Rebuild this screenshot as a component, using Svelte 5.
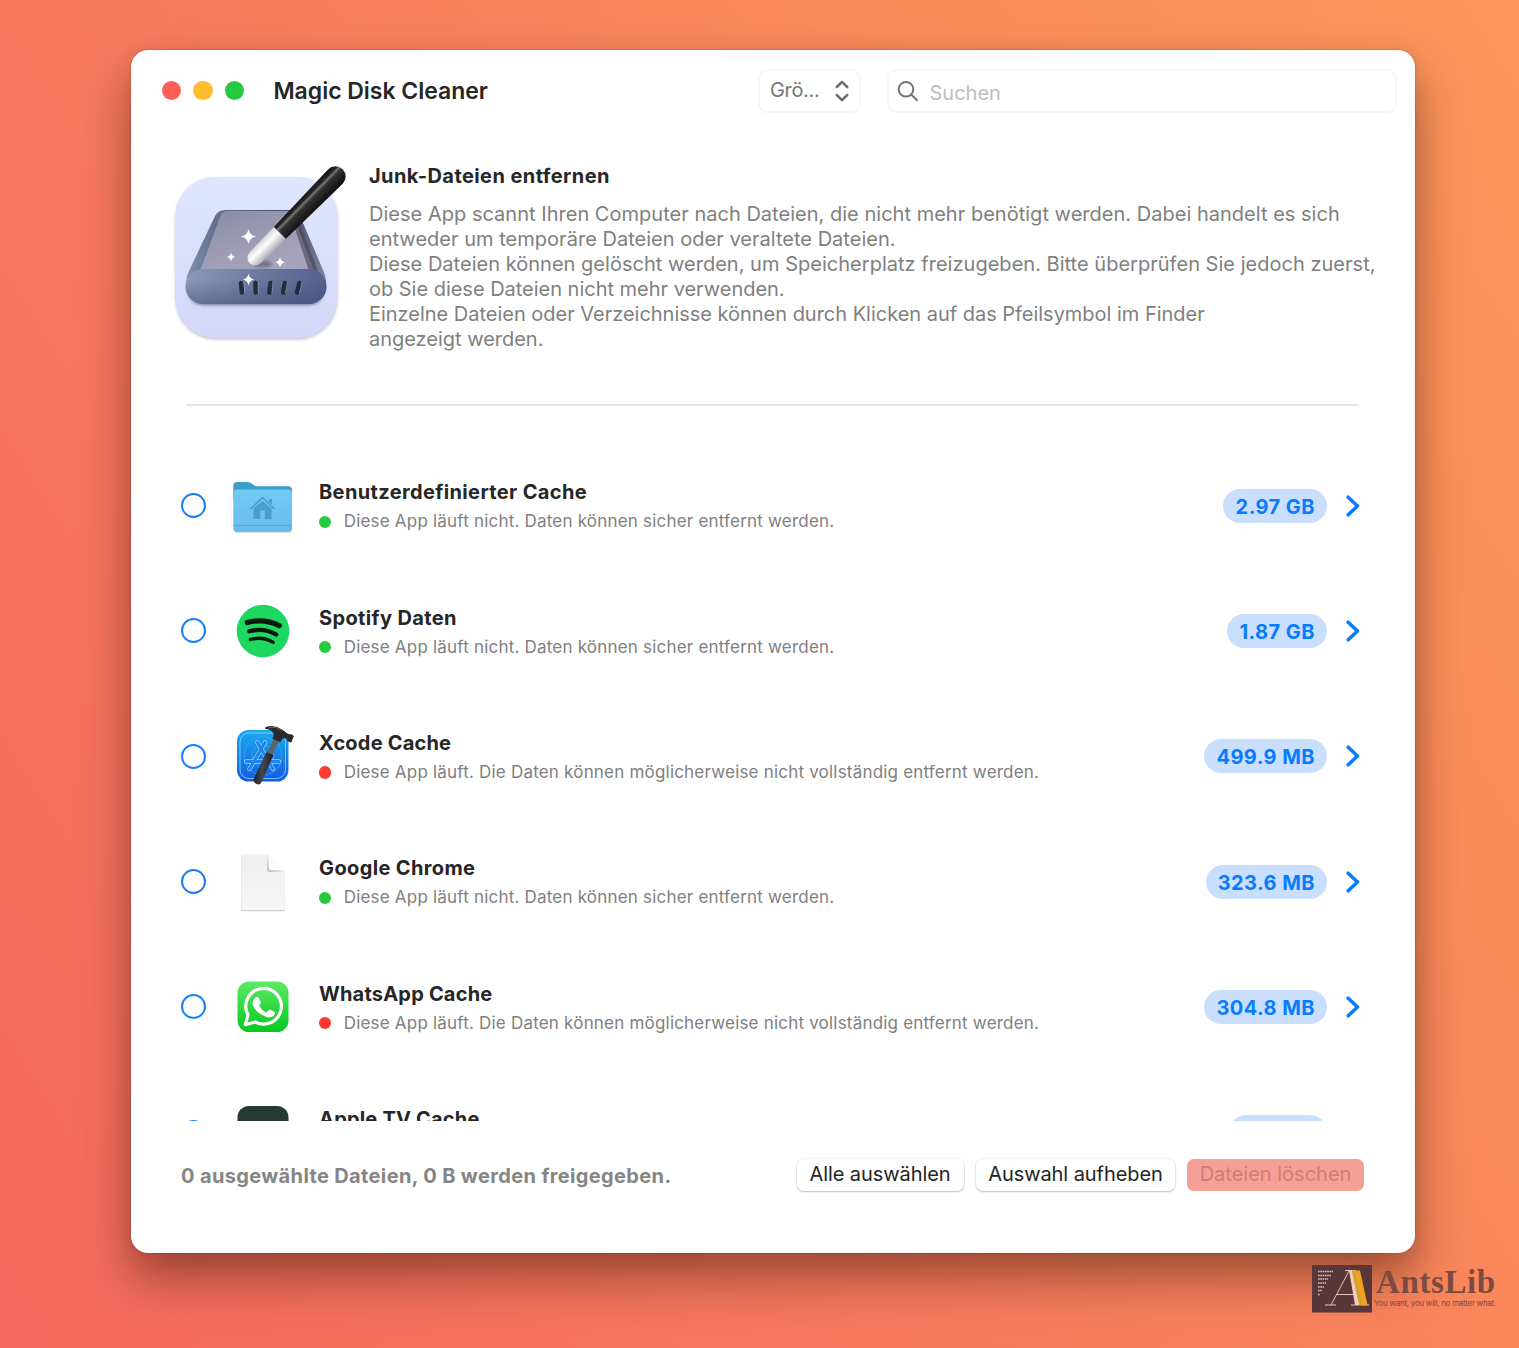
<script>
  const idle = 'Diese App läuft nicht. Daten können sicher entfernt werden.';
  const running = 'Diese App läuft. Die Daten können möglicherweise nicht vollständig entfernt werden.';
  const items = [
    { name: 'Benutzerdefinierter Cache', icon: 'folder', live: false, size: '2.97 GB' },
    { name: 'Spotify Daten', icon: 'spotify', live: false, size: '1.87 GB' },
    { name: 'Xcode Cache', icon: 'xcode', live: true, size: '499.9 MB' },
    { name: 'Google Chrome', icon: 'doc', live: false, size: '323.6 MB' },
    { name: 'WhatsApp Cache', icon: 'whatsapp', live: true, size: '304.8 MB' },
    { name: 'Apple TV Cache', icon: 'tv', live: false, size: '71.1 MB' }
  ];
  const lines = [
    'Diese App scannt Ihren Computer nach Dateien, die nicht mehr benötigt werden. Dabei handelt es sich',
    'entweder um temporäre Dateien oder veraltete Dateien.',
    'Diese Dateien können gelöscht werden, um Speicherplatz freizugeben. Bitte überprüfen Sie jedoch zuerst,',
    'ob Sie diese Dateien nicht mehr verwenden.',
    'Einzelne Dateien oder Verzeichnisse können durch Klicken auf das Pfeilsymbol im Finder',
    'angezeigt werden.'
  ];
</script>

<div class="desktop">
  <main class="window">
    <header>
      <div class="lights"><i class="close"></i><i class="min"></i><i class="max"></i></div>
      <h1>Magic Disk Cleaner</h1>
      <button class="sort">
        <span>Grö...</span>
        <svg width="14" height="22" viewBox="0 0 14 22"><path d="M1.800 7 7 1.800l5.200 5.200M1.800 15 7 20.200l5.200-5.200" /></svg>
      </button>
      <label class="search">
        <svg width="22" height="22" viewBox="0 0 22 22"><circle cx="9" cy="9.300" r="7.300" /><path d="m14.300 14.600 5.700 5.700" /></svg>
        <span>Suchen</span>
      </label>
    </header>

    <section class="intro">
      <svg class="app" width="200" height="210" viewBox="0 0 200 210">
        <defs>
          <linearGradient id="tile" x1="0" y1="0" x2="0" y2="1"><stop offset="0" stop-color="#dfe6fe" /><stop offset="1" stop-color="#d5d7f6" /></linearGradient>
          <linearGradient id="top" x1="0" y1="0" x2="0.6" y2="1"><stop offset="0" stop-color="#868ba5" /><stop offset=".55" stop-color="#9d9bb4" /><stop offset="1" stop-color="#a8a3bf" /></linearGradient>
          <linearGradient id="side" x1="0" y1="0" x2="1" y2="0"><stop offset="0" stop-color="#8391ad" /><stop offset=".2" stop-color="#62738f" /><stop offset=".75" stop-color="#454b6a" /><stop offset="1" stop-color="#8084a3" /></linearGradient>
          <linearGradient id="front" x1="0" y1="0" x2="1" y2="0"><stop offset="0" stop-color="#8b9ab5" /><stop offset=".5" stop-color="#6c7aa0" /><stop offset="1" stop-color="#53628e" /></linearGradient>
          <linearGradient id="shade" x1="0" y1="0" x2="0" y2="1"><stop offset=".3" stop-color="#38466e" stop-opacity="0" /><stop offset="1" stop-color="#38466e" stop-opacity=".45" /></linearGradient>
          <linearGradient id="stick" x1="0" y1="0" x2="0" y2="1"><stop offset="0" stop-color="#151515" /><stop offset=".22" stop-color="#242424" /><stop offset=".32" stop-color="#777" /><stop offset=".44" stop-color="#333" /><stop offset="1" stop-color="#0d0d0d" /></linearGradient>
          <linearGradient id="tip" x1="0" y1="0" x2="0" y2="1"><stop offset="0" stop-color="#d5d5da" /><stop offset=".4" stop-color="#fff" /><stop offset="1" stop-color="#aaa9b0" /></linearGradient>
          <filter id="soft" x="-30%" y="-50%" width="160%" height="200%"><feGaussianBlur stdDeviation="1.800" /></filter>
        </defs>
        <rect x="15.500" y="28" width="162" height="161.500" rx="40" fill="#66688a" opacity=".4" filter="url(#soft)" />
        <rect x="15.500" y="27" width="162" height="161" rx="40" fill="url(#tile)" />
        <rect x="28" y="124" width="136" height="31.500" rx="15" fill="#39415f" opacity=".55" filter="url(#soft)" />
        <path d="M65 60h66q6 0 9 6l23 54q3 6 3 14H26q0-7 3-13l26-55q3-6 10-6Z" fill="url(#side)" />
        <path d="M67 61h60q5 0 7 6l20 54H40l20-54q2-6 7-6Z" fill="url(#top)" />
        <path d="M129 61q6 0 8 6l21 54h-9Z" fill="#474254" opacity=".6" />
        <rect x="25.500" y="119" width="141" height="35" rx="17.500" fill="url(#front)" />
        <rect x="25.500" y="119" width="141" height="35" rx="17.500" fill="url(#shade)" />
        <g fill="none" stroke="#252c3e" stroke-width="4.600" stroke-linecap="round"><path d="m81 133 1 9.500M95.500 133l.2 9.500M110.500 133l-1 9.500M125 133l-1.800 9.500M139.500 133l-2.500 9.500" /></g>
        <path d="m84 132 .8 11M98.300 132v11M113 132l-1 11M127.500 132l-2 11M142 132l-2.500 11" stroke="#8b98bb" stroke-width=".7" />
        <ellipse cx="102" cy="114" rx="10" ry="3.500" fill="#55506a" opacity=".6" filter="url(#soft)" />
        <g transform="translate(95.300 107.800) rotate(-45.400)">
          <path d="M0-7.800 36-8.500V8.500L0 7.800A7.800 7.800 0 0 1 0-7.800Z" fill="url(#tip)" />
          <path d="M35-8.500 114-10.300a10.300 10.300 0 0 1 0 20.600L35 8.500Z" fill="url(#stick)" />
        </g>
        <g fill="#fff">
          <path d="M88.500 79q1.200 6.500 7.500 7.500-6.300 1-7.500 7.500-1.200-6.500-7.500-7.500 6.300-1 7.500-7.500Z" />
          <path d="M71 102.500q.8 4 4.300 4.500-3.500.6-4.300 4.500-.8-3.900-4.300-4.500 3.500-.5 4.300-4.500Z" />
          <path d="M120 107q.9 4.600 5 5.200-4.100.8-5 5.200-.9-4.400-5-5.200 4.100-.6 5-5.200Z" />
          <path d="M88.500 123.500q.9 5.200 5.500 6-4.600.8-5.500 6-.9-5.200-5.500-6 4.600-.8 5.500-6Z" />
        </g>
      </svg>
      <div class="copy">
        <h2>Junk-Dateien entfernen</h2>
        {#each lines as line}<p>{line}</p>{/each}
      </div>
    </section>

    <hr />

    <ul>
      {#each items as item (item.name)}
        <li>
          <span class="radio"></span>
          <svg class="icon" width="64" height="64" viewBox="0 0 64 64">
            {#if item.icon === 'folder'}
              <defs><linearGradient id="fold" x1="0" y1="0" x2="0" y2="1"><stop offset="0" stop-color="#72cbf6" /><stop offset="1" stop-color="#66bbed" /></linearGradient></defs>
              <rect x="2.800" y="52" width="58" height="6.500" rx="3" fill="#a9bcc6" />
              <path d="M2.300 18V12q0-4 4-4h10q3 0 5 2l2 1.500q1 .8 3 .8H57q4 0 4 3.700V26H2.300Z" fill="#3b9dca" />
              <rect x="2.300" y="15.500" width="58.700" height="42" rx="4" fill="url(#fold)" />
              <path d="M2.800 51.500h57.700" stroke="#56a9d8" stroke-width="1" />
              <path d="M31.500 27 22.500 34.500V45h6.700v-8.500h4.600V45h6.700V34.500Z" fill="#489fcd" />
              <path d="m20 34.500 11.500-10.800L43 34.500" fill="none" stroke="#489fcd" stroke-width="1.600" stroke-linecap="round" />
              <path d="M38 25h3v5.500l-3-2.800Z" fill="#489fcd" />
            {:else if item.icon === 'spotify'}
              <circle cx="32" cy="32" r="26.300" fill="#1ed760" />
              <g fill="none" stroke="#08180d" stroke-linecap="round"><path d="M16.300 23.600q17-4.800 32 3" stroke-width="5.200" /><path d="M18.200 32.300q14.500-4 27 3.200" stroke-width="4.300" /><path d="M19.400 40.400q12.500-3.200 22.800 3" stroke-width="3.400" /></g>
            {:else if item.icon === 'xcode'}
              <defs>
                <linearGradient id="xc" x1="0" y1="0" x2="0" y2="1"><stop offset="0" stop-color="#19a9f0" /><stop offset="1" stop-color="#145be3" /></linearGradient>
                <linearGradient id="shaft" x1="0" y1="0" x2="1" y2="0"><stop offset="0" stop-color="#202225" /><stop offset=".45" stop-color="#43464a" /><stop offset="1" stop-color="#1c1e20" /></linearGradient>
              </defs>
              <rect x="6" y="6" width="51.500" height="51.500" rx="11.500" fill="url(#xc)" />
              <rect x="9" y="9" width="45.500" height="45.500" rx="9" fill="none" stroke="#8fdcff" stroke-width=".8" />
              <g fill="none" stroke="#5ec4fa" stroke-width=".4"><circle cx="32" cy="32" r="19" /><circle cx="32" cy="32" r="11" /></g>
              <g fill="none" stroke-linecap="round"><path d="M34 18.500 18.500 45M26.500 18.500 42 45M15 37.500h33" stroke="#8fd8ff" stroke-width="4.400" /><path d="M34 18.500 18.500 45M26.500 18.500 42 45M15 37.500h33" stroke="#1f84ea" stroke-width="3" /></g>
              <path d="m43.500 13 5 2.200-8 18-5.500-2.400Z" fill="#5d646b" />
              <path d="m35.500 28 6.800 3L31 57.500q-1.600 4-5.600 2.500-4-1.700-2.300-6Z" fill="url(#shaft)" />
              <path d="M34 3.500q9-3.600 17.500 2.200l5 3.800q1.700 1.300 3.400.6l3 2-2.700 6.700-4-1.700q.3-1.700-1.500-2.500l-2.700-.7-2.700 4.400-8-3.600 1.700-3.900Q41.500 5.500 34 4.700Z" fill="#292b2e" />
              <path d="M38 3.600q7-1.500 13 2.900" fill="none" stroke="#858585" stroke-width=".7" />
            {:else if item.icon === 'doc'}
              <defs>
                <linearGradient id="paper" x1="0" y1="0" x2="0" y2="1"><stop offset="0" stop-color="#efefef" /><stop offset="1" stop-color="#f6f6f6" /></linearGradient>
                <linearGradient id="curl" x1="0" y1="1" x2="1" y2="0"><stop offset=".1" stop-color="#c4c4c4" /><stop offset=".5" stop-color="#efefef" /></linearGradient>
              </defs>
              <path d="M10 6h28l16 16v37.500q0 1.700-1.700 1.700H12q-2 0-2-1.700Z" fill="#c6c6c6" />
              <path d="M10.200 4.500h27.300L54 20.500v38q0 1.700-1.700 1.700H12q-1.800 0-1.800-1.700Z" fill="url(#paper)" />
              <path d="M36 4.500h1.500L54 20.500v1.500H38.500q-2.500 0-2.500-2.500Z" fill="url(#curl)" />
              <path d="M37.800 5 53.500 20H40q-2.200 0-2.200-2.200Z" fill="#fcfcfc" />
            {:else if item.icon === 'whatsapp'}
              <defs><linearGradient id="wa" x1="0" y1="0" x2="0" y2="1"><stop offset="0" stop-color="#5cea68" /><stop offset="1" stop-color="#05c91d" /></linearGradient></defs>
              <rect x="6.500" y="6.500" width="51" height="50.500" rx="11.500" fill="url(#wa)" />
              <path d="m14.300 49.700 2.700-9.800A17.800 17.800 0 1 1 24.200 47Z" fill="none" stroke="#fff" stroke-width="3.200" stroke-linejoin="round" />
              <path d="M24 23q2.200-2 3.600-.4l2.200 4.500q.4 1-1.600 3.300 2.500 5 7.300 7.200l2-2.300q.9-1 2-.5l4 2.200q1.400.8-.5 3.400-3 3-7.700 1.500-9-3-12.900-10.400-2.500-5.300 1.600-8.500Z" fill="#fff" />
            {:else}
              <rect x="6.500" y="6" width="51" height="51" rx="11.500" fill="#263932" />
            {/if}
          </svg>
          <div class="label">
            <h3 class:tight={item.name.length < 15 && item.icon !== 'spotify' && item.icon !== 'doc'}>{item.name}</h3>
            <p class:live={item.live}><i></i><span>{item.live ? running : idle}</span></p>
          </div>
          <b class="badge">{item.size}</b>
          <svg class="chev" width="14" height="22" viewBox="0 0 14 22"><path d="M2.200 2.200 11.500 11l-9.300 8.800" /></svg>
        </li>
      {/each}
    </ul>

    <footer>
      <strong>0 ausgewählte Dateien, 0 B werden freigegeben.</strong>
      <button class="all">Alle auswählen</button>
      <button class="none">Auswahl aufheben</button>
      <button class="delete" disabled>Dateien löschen</button>
    </footer>
  </main>

  <div class="brand">
    <svg width="60" height="48" viewBox="0 0 60 48">
      <rect width="60" height="47.500" fill="#58373a" />
      <g stroke="#e9c0b2" stroke-width="1.500" stroke-dasharray="1.600 .7"><path d="M6 6.500h15M6 10.500h13M6 14h10M6 18h8M6 22h6M6 25.500h4M6 29.500h2" /></g>
      <path d="m37 6-18 34M24 29.500h18M13 40h11M33 5.500h11M39 40h18" fill="none" stroke="#e8c4b5" stroke-width="1" />
      <path d="M37 5.500h4l7 34.500h-5Z" fill="#f6cbbb" />
      <path d="M40 5.500h8L55.500 40h-8Z" fill="#f5a021" />
      <path d="M40 5.500h3L50 40h-3Z" fill="#c9a92b" />
    </svg>
    <div><div class="word">AntsLib</div><div class="motto">You want, you will, no matter what.</div></div>
  </div>
</div>

<style>
  :global(body) { margin: 0; }
  .desktop {
    width: 1519px; height: 1348px; box-sizing: border-box; padding: 50px 0 0 131px; overflow: hidden; position: relative;
    background: linear-gradient(58deg, #f3695f 0%, #f77b5d 42%, #fb8c5b 75%, #fd975a 100%);
    font-family: Inter, 'Liberation Sans', sans-serif; color: #262626;
  }
  h1, h2, h3, p, ul { margin: 0; padding: 0; white-space: nowrap; }
  button { font: inherit; padding: 0; }
  .window {
    width: 1284px; height: 1203px; border-radius: 17px; background: #fff; display: flex; flex-direction: column;
    box-shadow: 0 0 2px rgba(60, 20, 10, .4), 0 26px 48px rgba(60, 25, 10, .46), 0 6px 24px rgba(60, 25, 10, .08);
  }
  header { height: 81px; display: flex; align-items: center; padding: 0 18px 0 31px; flex: none; }
  .lights { display: flex; gap: 12.200px; }
  .lights i { width: 19.200px; height: 19.200px; border-radius: 50%; }
  .close { background: #fe5f57; }
  .min { background: #febc2e; }
  .max { background: #28c840; }
  h1 { font-size: 23px; font-weight: 600; margin-left: 29.500px; letter-spacing: -.03px; }
  .sort {
    margin-left: auto; width: 103px; height: 44px; border: 2px solid #f6f6f6; border-radius: 9px; background: #fff;
    display: flex; align-items: center; justify-content: space-between; padding: 0 10px; box-sizing: border-box; color: #777; font-size: 20px;
  }
  .sort span { letter-spacing: -.35px; padding-bottom: 1px; }
  .sort path { fill: none; stroke: #6e6e6e; stroke-width: 2.500; stroke-linecap: round; stroke-linejoin: round; }
  .search {
    margin-left: 26px; width: 510px; height: 44px; border: 2px solid #f6f6f6; border-radius: 9px; box-sizing: border-box;
    display: flex; align-items: center; padding-left: 8px; gap: 10.500px; color: #bdbdbd; font-size: 20px;
  }
  .search span { padding-top: 4px; }
  .search circle, .search path { fill: none; stroke: #727272; stroke-width: 2; stroke-linecap: round; }
  .intro { height: 273px; display: flex; padding: 19px 0 0 29px; box-sizing: border-box; flex: none; }
  .copy { margin-left: 9px; padding-top: 12px; color: #7f7f7f; }
  h2 { font-size: 20px; font-weight: 700; line-height: 28px; margin-bottom: 12px; color: #262626; letter-spacing: .42px; }
  .copy p { font-size: 20px; line-height: 25px; letter-spacing: .02px; }
  .copy p:nth-last-child(-n + 3) { letter-spacing: -.02px; }
  hr { width: 1173px; height: 2px; border: 0; background: #e6e6e6; margin: 0 0 0 55px; flex: none; }
  ul { height: 715px; padding-top: 37px; box-sizing: border-box; overflow: hidden; list-style: none; flex: none; }
  li { height: 125.300px; display: flex; align-items: center; padding: 0 55px 0 50px; }
  .radio { width: 25px; height: 25px; border: 2px solid #167efb; border-radius: 50%; box-sizing: border-box; flex: none; }
  .icon { margin-left: 24.500px; flex: none; }
  .label { margin-left: 24.500px; padding-top: 4.500px; }
  h3 { font-size: 20px; font-weight: 700; line-height: 28px; letter-spacing: .37px; }
  h3.tight { letter-spacing: .2px; }
  .label p { display: flex; align-items: center; line-height: 31px; font-size: 17px; color: #808080; letter-spacing: .2px; }
  .label i { width: 12.500px; height: 12.500px; border-radius: 50%; background: #28c840; margin-right: 12.500px; margin-left: -.3px; }
  .label .live i { background: #fe3b30; }
  .badge { margin-left: auto; height: 34px; line-height: 36px; border-radius: 17px; padding: 0 12px 0 12.200px; background: #cadffd; color: #087cff; font-size: 20px; font-weight: 700; letter-spacing: .45px; }
  .chev { margin-left: 19px; }
  .chev path { fill: none; stroke: #087cff; stroke-width: 3.500; stroke-linecap: round; stroke-linejoin: round; }
  footer { display: flex; align-items: center; padding: 37px 51px 0 50px; height: 34px; }
  footer strong { font-size: 20px; font-weight: 700; color: #858585; margin-right: auto; padding-top: 2px; white-space: nowrap; letter-spacing: .36px; }
  footer button { border: 0; height: 32px; border-radius: 7px; font-size: 20px; background: #fff; color: #242424; box-shadow: 0 0 1px 1px rgba(0, 0, 0, .05), 0 1px 2px rgba(0, 0, 0, .22); white-space: nowrap; padding-bottom: 2px; letter-spacing: -.07px; }
  .all { width: 167px; }
  .none { width: 199px; margin-left: 12.500px; }
  footer .delete { width: 177px; margin-left: 12px; background: #f4a097; color: #cf7e75; box-shadow: none; letter-spacing: 0; }
  .brand { position: absolute; left: 1312px; top: 1265px; display: flex; gap: 4px; color: #7c4a40; }
  .word { font: 700 33px/34px 'Liberation Serif', serif; letter-spacing: .6px; white-space: nowrap; }
  .motto { font-size: 8px; line-height: 8px; white-space: nowrap; letter-spacing: -.27px; margin-left: -2px; }
</style>
